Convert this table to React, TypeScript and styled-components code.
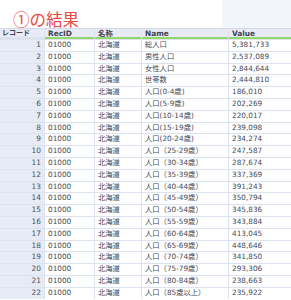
import React from "react"
import styled, { createGlobalStyle } from "styled-components"

const rows: [string, string][] = [
  ["総人口", "5,381,733"],
  ["男性人口", "2,537,089"],
  ["女性人口", "2,844,644"],
  ["世帯数", "2,444,810"],
  ["人口(0-4歳)", "186,010"],
  ["人口(5-9歳)", "202,269"],
  ["人口(10-14歳)", "220,017"],
  ["人口(15-19歳)", "239,098"],
  ["人口(20-24歳)", "234,274"],
  ["人口（25-29歳）", "247,587"],
  ["人口（30-34歳）", "287,674"],
  ["人口（35-39歳）", "337,369"],
  ["人口（40-44歳）", "391,243"],
  ["人口（45-49歳）", "350,794"],
  ["人口（50-54歳）", "345,836"],
  ["人口（55-59歳）", "343,884"],
  ["人口（60-64歳）", "413,045"],
  ["人口（65-69歳）", "448,646"],
  ["人口（70-74歳）", "341,850"],
  ["人口（75-79歳）", "293,306"],
  ["人口（80-84歳）", "238,663"],
  ["人口（85歳以上）", "235,922"],
]

const GlobalStyle = createGlobalStyle`
  body {
    margin: 0;
    background: #ffffff;
    font-family: "DejaVu Sans", "Noto Sans CJK JP", sans-serif;
  }
`

export default function App() {
  return (
    <Page>
      <GlobalStyle />
      <TitleBar>
        <Title>①の結果</Title>
        <TitleFill />
      </TitleBar>
      <Grid>
        <HeadCell $corner>レコード</HeadCell>
        <HeadCell>RecID</HeadCell>
        <HeadCell>名称</HeadCell>
        <HeadCell>Name</HeadCell>
        <HeadCell>Value</HeadCell>
        {rows.map(([name, value], i) => (
          <React.Fragment key={i}>
            <RowNum>{i + 1}</RowNum>
            <Cell>01000</Cell>
            <Cell>北海道</Cell>
            <Cell>{name}</Cell>
            <Cell>{value}</Cell>
          </React.Fragment>
        ))}
      </Grid>
    </Page>
  )
}

const Page = styled.div`
  width: 291px;
  height: 300px;
  overflow: hidden;
`

const TitleBar = styled.div`
  display: flex;
  height: 28px;
`

const Title = styled.div`
  width: 209px;
  padding-left: 13px;
  display: flex;
  align-items: flex-end;
  padding-bottom: 1px;
  color: #ec4a45;
  font-family: "Noto Sans CJK JP", sans-serif;
  font-size: 16.5px;
  line-height: 1;
`

const TitleFill = styled.div`
  flex: 1;
  background: #f3f5fc;
`

const Grid = styled.div`
  display: grid;
  grid-template-columns: 44px 49px 46px 86px 1fr;
  grid-template-rows: 10px;
  grid-auto-rows: 10.8px;
  column-gap: 1px;
  row-gap: 1px;
  background: #dde3ee;
  border-top: 1px solid #d3d9e8;
`

const HeadCell = styled.div<{ $corner?: boolean }>`
  background: #e8ebf5;
  font-weight: bold;
  font-size: ${p => (p.$corner ? "7px" : "7.4px")};
  color: #3c4352;
  padding-left: ${p => (p.$corner ? "2px" : "3px")};
  line-height: 9px;
  border-bottom: 2px solid ${p => (p.$corner ? "#dde3ee" : "#93d866")};
  white-space: nowrap;
  overflow: hidden;
`

const RowNum = styled.div`
  background: #e6ebf6;
  font-size: 7.4px;
  color: #4a4f5a;
  text-align: right;
  padding-right: 3px;
  line-height: 10.8px;
`

const Cell = styled.div`
  background: #ffffff;
  font-size: 7.3px;
  color: #444a55;
  padding-left: 3px;
  line-height: 10.8px;
  white-space: nowrap;
  overflow: hidden;
`
